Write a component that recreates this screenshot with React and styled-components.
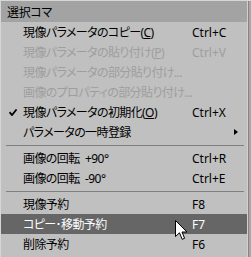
import React from "react";
import styled, { createGlobalStyle } from "styled-components";

const Global = createGlobalStyle`
  html, body { margin: 0; padding: 0; background: #c0c0c0; }
  body { width: 251px; height: 257px; overflow: hidden; }
`;

const items = [
  { label: "現像パラメータのコピー", key: "C", shortcut: "Ctrl+C" },
  { label: "現像パラメータの貼り付け", key: "P", shortcut: "Ctrl+V", disabled: true },
  { label: "現像パラメータの部分貼り付け...", disabled: true },
  { label: "画像のプロパティの部分貼り付け...", disabled: true },
  { label: "現像パラメータの初期化", key: "O", shortcut: "Ctrl+X", checked: true },
  { label: "パラメータの一時登録", submenu: true },
  { sep: true },
  { label: "画像の回転 +90°", shortcut: "Ctrl+R" },
  { label: "画像の回転 -90°", shortcut: "Ctrl+E" },
  { sep: true },
  { label: "現像予約", shortcut: "F8" },
  { label: "コピー･移動予約", shortcut: "F7", active: true },
  { label: "削除予約", shortcut: "F6" },
];

function Menu() {
  return (
    <MenuBox>
      <Header>選択コマ</Header>
      {items.map((it, i) =>
        it.sep ? (
          <Separator key={i} />
        ) : (
          <Row key={i} $disabled={it.disabled} $active={it.active}>
            <Check>
              {it.checked && (
                <svg width="8" height="7" viewBox="0 0 8 7">
                  <path d="M0.5 3.2 L3 6 L7.6 0.4" fill="none" stroke="#000" strokeWidth="1.8" />
                </svg>
              )}
            </Check>
            <Label>
              {it.label}
              {it.key && (
                <>
                  (<u>{it.key}</u>)
                </>
              )}
            </Label>
            <Shortcut>{it.shortcut}</Shortcut>
            <Arrow>{it.submenu && <Triangle />}</Arrow>
          </Row>
        )
      )}
      <Cursor width="13" height="21" viewBox="0 0 13 21">
        <path
          d="M0.5 0.5 L0.5 16.5 L4.5 12.8 L7.2 19.3 L9.6 18.3 L7 12 L12 12 Z"
          fill="#fff"
          stroke="#000"
          strokeWidth="1"
        />
      </Cursor>
    </MenuBox>
  );
}

const MenuBox = styled.div`
  position: relative;
  width: 251px;
  height: 257px;
  box-sizing: border-box;
  background: #c0c0c0;
  border-top: 1px solid #d6d6d6;
  border-left: 1px solid #d6d6d6;
  padding-right: 4px;
  box-shadow: inset -1px 0 #a8a8a8, inset -2px 0 #a8a8a8, inset -3px 0 #868686,
    inset -4px 0 #d0d0d0;
  font-family: "Noto Sans", "Noto Sans CJK JP", sans-serif;
  font-size: 12px;
  color: #000;
  display: flex;
  flex-direction: column;
`;

const Header = styled.div`
  height: 21px;
  background: #a3a3a3;
  padding-left: 6px;
  display: flex;
  align-items: center;
  font-feature-settings: "palt";
  letter-spacing: -0.3px;
`;

const Row = styled.div`
  height: 20px;
  display: grid;
  grid-template-columns: 22px 1fr 41px 14px;
  align-items: center;
  background: ${(p) => (p.$active ? "#666666" : "transparent")};
  color: ${(p) => (p.$active ? "#ffffff" : p.$disabled ? "#9e9e9e" : "#000000")};
  white-space: nowrap;
`;

const Check = styled.span`
  display: flex;
  justify-content: flex-start;
  padding-left: 8px;
`;

const Label = styled.span`
  font-feature-settings: "palt";
  letter-spacing: -0.6px;
  word-spacing: 3px;
  u { text-underline-offset: 1px; }
`;

const Shortcut = styled.span``;

const Arrow = styled.span`
  display: flex;
  align-items: center;
  padding-left: 1px;
`;

const Triangle = styled.span`
  width: 0;
  height: 0;
  border-top: 3.5px solid transparent;
  border-bottom: 3.5px solid transparent;
  border-left: 4px solid #000;
`;

const Separator = styled.div`
  height: 6px;
  display: flex;
  align-items: center;
  padding-left: 5px;
  padding-right: 3px;
  &::after {
    content: "";
    flex: 1;
    height: 1px;
    background: #808080;
  }
`;

const Cursor = styled.svg`
  position: absolute;
  left: 174px;
  top: 219px;
`;

export default function App() {
  return (
    <>
      <Global />
      <Menu />
    </>
  );
}
